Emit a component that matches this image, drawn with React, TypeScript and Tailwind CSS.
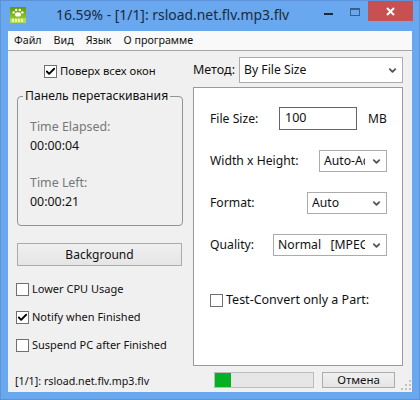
import type { ReactNode } from 'react'
import { Check, ChevronDown } from 'lucide-react'

const ui = { fontFamily: '"Noto Sans", Tahoma, sans-serif' }

function Box({ checked, label, className, textClass }: { checked?: boolean; label: string; className?: string; textClass?: string }) {
  return (
    <div className={`flex items-center gap-[3px] ${className ?? ''}`}>
      <span className="flex h-[13px] w-[13px] shrink-0 items-center justify-center border border-[#707070] bg-white">
        {checked && <Check className="h-[11px] w-[11px] text-black" strokeWidth={4} />}
      </span>
      <span className={`whitespace-nowrap leading-[14px] text-[#111] ${textClass ?? 'text-[11px]'}`}>{label}</span>
    </div>
  )
}

function Combo({ value, width, height = 22, className }: { value: string; width: number; height?: number; className?: string }) {
  return (
    <div
      className={`flex items-center border border-[#ababab] bg-white pl-[4px] pr-[4px] ${className ?? ''}`}
      style={{ width, height }}
    >
      <span className="min-w-0 flex-1 overflow-hidden whitespace-pre text-[12.2px] text-[#111]">{value}</span>
      <ChevronDown className="ml-[6px] h-[11px] w-[11px] shrink-0 text-[#555]" strokeWidth={4} />
    </div>
  )
}

function Row({ label, children, className }: { label: string; children: ReactNode; className?: string }) {
  return (
    <div className={`flex items-center justify-between ${className ?? ''}`}>
      <span className="mt-[1px] text-[12.2px] text-[#111]">{label}</span>
      {children}
    </div>
  )
}

function AppIcon() {
  return (
    <svg width="16" height="16" viewBox="0 0 16 16" className="shrink-0">
      <defs>
        <linearGradient id="ico" x1="0" y1="0" x2="0" y2="1">
          <stop offset="0" stopColor="#5c9a08" />
          <stop offset="1" stopColor="#8fc525" />
        </linearGradient>
      </defs>
      <rect x="0" y="0" width="16" height="11" fill="url(#ico)" />
      <rect x="0" y="11" width="16" height="5" fill="#b4d853" />
      <ellipse cx="8" cy="7.4" rx="3" ry="2.2" fill="#fff" />
      <circle cx="3.6" cy="5.4" r="1.2" fill="#fff" />
      <circle cx="6.2" cy="3" r="1.2" fill="#fff" />
      <circle cx="9.8" cy="3" r="1.2" fill="#fff" />
      <circle cx="12.4" cy="5.4" r="1.2" fill="#fff" />
      <path d="M2 12h2v3H2zM5 12h2v3H5zM8 12h2v3H8zM11 12h2v3h-2z" fill="#e9f6b4" />
    </svg>
  )
}

function TitleBar() {
  return (
    <div className="flex h-[31px] items-start">
      <div className="ml-[10px] mt-[7px]">
        <AppIcon />
      </div>
      <span className="ml-[30px] mt-[4px] whitespace-nowrap text-[13.9px] leading-[22px] text-[#1b2a3c]">16.59% - [1/1]: rsload.net.flv.mp3.flv</span>
      <div className="ml-auto flex items-start">
        <div className="mr-[17px] mt-[13px] h-[2px] w-[9px] bg-[#1b2a3c]" />
        <div className="mr-[8px] mt-[8px] h-[8px] w-[10px] border border-t-2 border-[#3a5f8f]" />
        <div className="mr-[7px] mt-[1px] flex h-[20px] w-[45px] items-center justify-center bg-[#c75050]">
          <svg width="9" height="9" viewBox="0 0 9 9">
            <path d="M1 1l7 7M8 1l-7 7" stroke="#fff" strokeWidth="2" />
          </svg>
        </div>
      </div>
    </div>
  )
}

function MenuBar() {
  return (
    <div className="flex h-[20px] items-center gap-[12px] border-b border-[#a9a59f] bg-[#f9f9f9] pl-[6px] text-[10.7px] text-[#111]">
      <span>Файл</span>
      <span>Вид</span>
      <span>Язык</span>
      <span>О программе</span>
    </div>
  )
}

function LeftColumn() {
  return (
    <div className="flex w-[176px] shrink-0 flex-col pl-[9px]">
      <Box checked label="Поверх всех окон" className="ml-[27px] mt-[13px]" textClass="text-[11.3px]" />
      <fieldset className="mt-[10px] h-[138px] w-[166px] min-w-0 rounded-[4px] border border-[#8f9496] px-[12px]">
        <legend className="ml-[-7px] whitespace-nowrap px-[2px] text-[12.2px] leading-[16px] text-[#111]">Панель перетаскивания</legend>
        <p className="mt-[15px] text-[12.4px] leading-[16px] text-[#777]">Time Elapsed:</p>
        <p className="mt-[3px] text-[12.4px] leading-[16px] text-[#111]">00:00:04</p>
        <p className="mt-[21px] text-[12.4px] leading-[16px] text-[#777]">Time Left:</p>
        <p className="mt-[3px] text-[12.4px] leading-[16px] text-[#111]">00:00:21</p>
      </fieldset>
      <button className="mt-[17px] h-[23px] w-[165px] border border-[#acacac] bg-gradient-to-b from-[#f0f0f0] to-[#e5e5e5] text-[12px] text-[#111]">
        Background
      </button>
      <Box label="Lower CPU Usage" className="ml-[-1px] mt-[16px]" />
      <Box checked label="Notify when Finished" className="ml-[-1px] mt-[14px]" />
      <Box label="Suspend PC after Finished" className="ml-[-1px] mt-[14px]" />
    </div>
  )
}

function RightColumn() {
  return (
    <div className="ml-[9px] flex w-[210px] shrink-0 flex-col">
      <div className="mt-[6px] flex items-center justify-between">
        <span className="text-[12.5px] text-[#111]">Метод:</span>
        <Combo value="By File Size" width={164} height={26} />
      </div>
      <div className="mt-[4px] flex h-[279px] w-[210px] flex-col border border-[#9a9a9a] bg-white pl-[16px] pr-[15px]">
        <Row label="File Size:" className="mt-[19px]">
          <div className="flex items-center">
            <div className="flex h-[23px] w-[78px] items-center border border-[#646464] px-[5px] text-[12.5px] text-[#111]">100</div>
            <span className="ml-[11px] w-[19px] text-[12px] text-[#111]">MB</span>
          </div>
        </Row>
        <Row label="Width x Height:" className="mt-[20px]">
          <Combo value="Auto-Adjust" width={68} />
        </Row>
        <Row label="Format:" className="mt-[20px]">
          <Combo value="Auto" width={80} />
        </Row>
        <Row label="Quality:" className="mt-[20px]">
          <Combo value="Normal   [MPEG-4]" width={114} />
        </Row>
        <Box label="Test-Convert only a Part:" className="mt-[37px]" textClass="text-[12.5px]" />
      </div>
    </div>
  )
}

function StatusBar() {
  return (
    <div className="flex h-[26px] items-start pt-[6px]">
      <span className="ml-[7px] mt-[1px] w-[199px] whitespace-nowrap text-[10.7px] leading-[16px] text-[#111]">[1/1]: rsload.net.flv.mp3.flv</span>
      <div className="h-[16px] w-[100px] border border-[#bcbcbc] bg-[#e6e6e6]">
        <div className="h-full w-[16px] bg-[#06b025]" />
      </div>
      <button className="ml-[8px] h-[16px] w-[73px] border border-[#acacac] bg-gradient-to-b from-[#f0f0f0] to-[#e5e5e5] text-[11.5px] leading-[14px] text-[#111]">
        Отмена
      </button>
      <svg width="12" height="12" viewBox="0 0 12 12" className="ml-[5px] mt-[7px]">
        <path d="M9 1h2v2H9zM5 5h2v2H5zM9 5h2v2H9zM1 9h2v2H1zM5 9h2v2H5zM9 9h2v2H9z" fill="#c4c4bc" />
      </svg>
    </div>
  )
}

export default function App() {
  return (
    <div className="h-[400px] w-[420px] overflow-hidden bg-[#69a7ef] shadow-[inset_0_0_0_1px_#5b93d6]" style={ui}>
      <TitleBar />
      <div className="mx-[8px] h-[361px] w-[404px] bg-[#f0f0f0]">
        <MenuBar />
        <div className="flex h-[315px]">
          <LeftColumn />
          <RightColumn />
        </div>
        <StatusBar />
      </div>
    </div>
  )
}
